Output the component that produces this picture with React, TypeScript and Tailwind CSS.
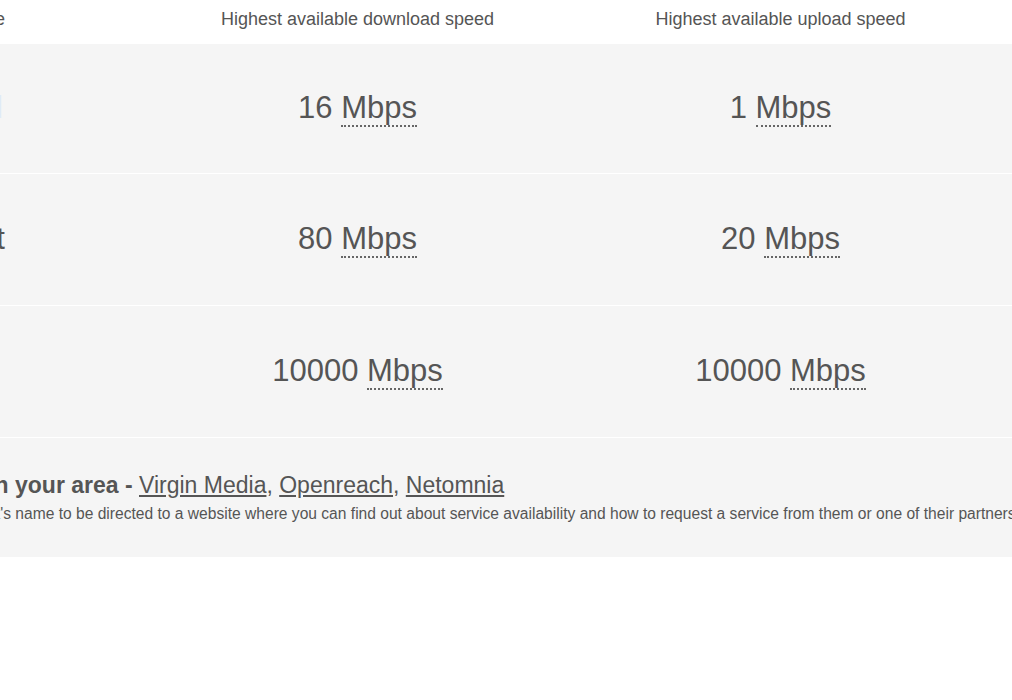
const rows = [
  { label: 'Standard', labelClass: 'mr-[3px] text-[#dfebf8]', down: '16', up: '1', h: 'h-[130px]' },
  { label: 'Superfast', labelClass: 'mr-[1px] text-[#555555]', down: '80', up: '20', h: 'h-[132px]' },
  { label: 'Ultrafast Full Fibre', labelClass: 'mr-[60px] text-[#555555]', down: '10000', up: '10000', h: 'h-[132px]' },
];

function Speed({ value }: { value: string }) {
  return (
    <span className="text-[31px] text-[#555555] whitespace-nowrap">
      {value}{' '}
      <abbr title="Megabits per second" className="no-underline border-b-2 border-dotted border-[#666666]">
        Mbps
      </abbr>
    </span>
  );
}

export default function App() {
  return (
    <div className="w-full min-h-[700px] bg-white overflow-hidden font-['Liberation_Sans',Arial,sans-serif] text-[#555555]">
      <div className="grid grid-cols-[146px_423px_423px_1fr] h-[44px] items-start pt-[9px] text-[18px] leading-[20px] bg-white">
        <div className="flex justify-end pr-[141px] whitespace-nowrap">Broadband type</div>
        <div className="text-center whitespace-nowrap">Highest available download speed</div>
        <div className="text-center whitespace-nowrap">Highest available upload speed</div>
        <div />
      </div>

      {rows.map((row) => (
        <div
          key={row.label}
          className={`grid grid-cols-[146px_423px_423px_1fr] items-center bg-[#f5f5f5] border-b border-white ${row.h}`}
        >
          <div className="flex justify-end pr-[140px] whitespace-nowrap text-[31px]">
            <span className={`shrink-0 ${row.labelClass}`}>{row.label}</span>
          </div>
          <div className="text-center">
            <Speed value={row.down} />
          </div>
          <div className="text-center">
            <Speed value={row.up} />
          </div>
          <div />
        </div>
      ))}

      <div className="h-[119px] bg-[#f5f5f5] pt-[33px]">
        <div className="flex items-baseline whitespace-nowrap text-[23px] leading-[28px]">
          <div className="flex justify-end w-[139px] shrink-0">
            <b className="font-bold">Broadband networks available in your area -&nbsp;</b>
          </div>
          <a href="#" className="underline underline-offset-2 text-[#555555]">Virgin Media</a>
          <span>,&nbsp;</span>
          <a href="#" className="underline underline-offset-2 text-[#555555]">Openreach</a>
          <span>,&nbsp;</span>
          <a href="#" className="underline underline-offset-2 text-[#555555]">Netomnia</a>
        </div>
        <div className="flex whitespace-nowrap text-[15.6px] leading-[18px] mt-[6px]">
          <div className="flex justify-end w-[11px] shrink-0">
            <span>Click on a network's</span>
          </div>
          <span>&nbsp;name to be directed to a website where you can find out about service availability and how to request a service from them or one of their partners.</span>
        </div>
      </div>
    </div>
  );
}
